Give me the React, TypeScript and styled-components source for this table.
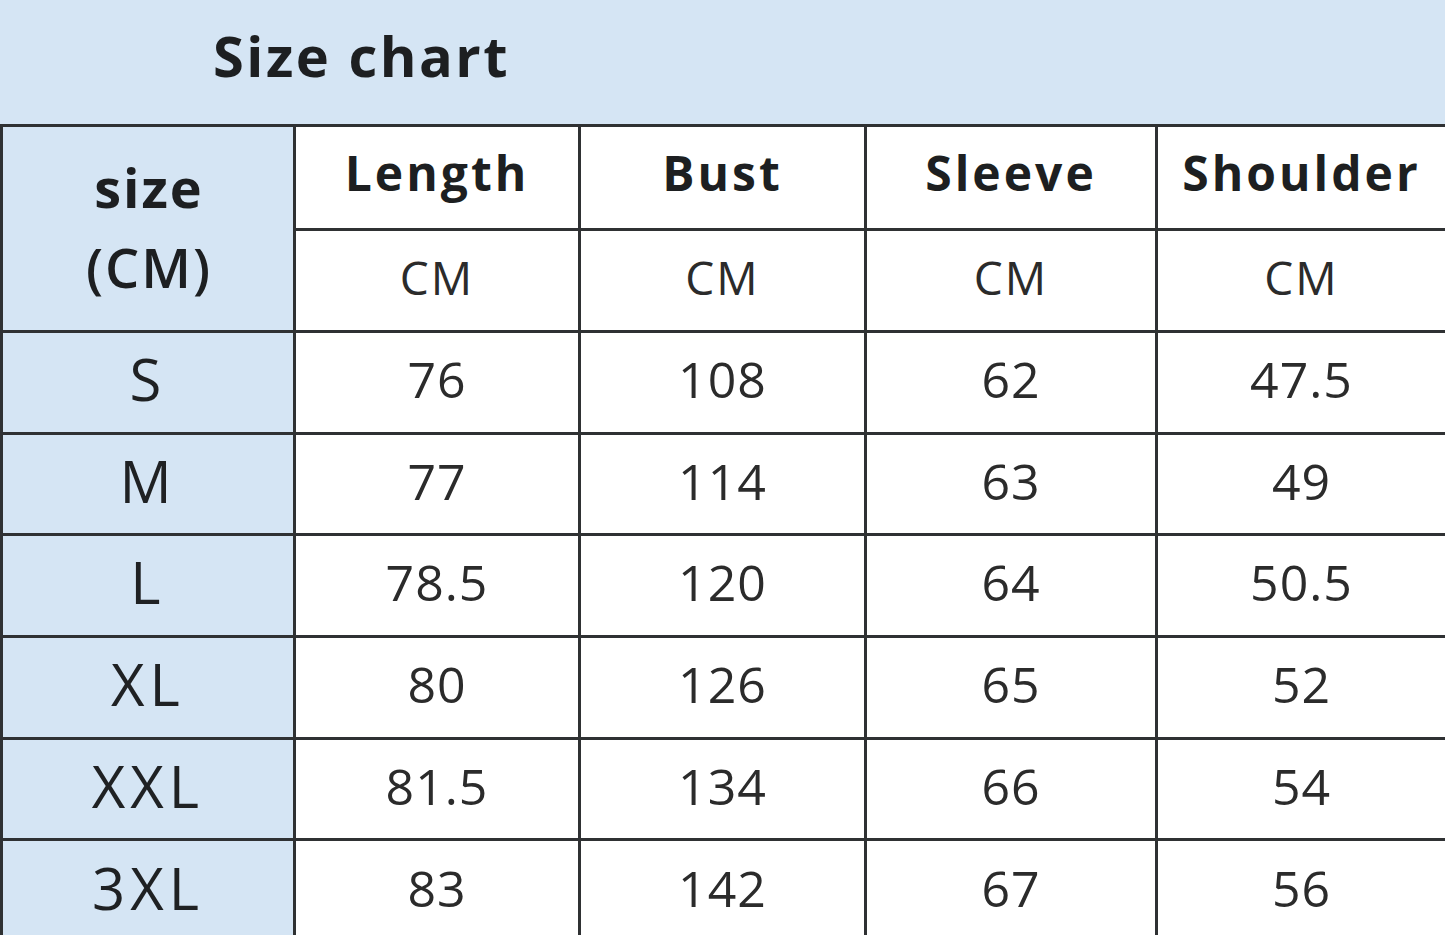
import styled, { createGlobalStyle } from "styled-components"

const columns = ["Length", "Bust", "Sleeve", "Shoulder"]

const rows = [
  { size: "S", values: ["76", "108", "62", "47.5"] },
  { size: "M", values: ["77", "114", "63", "49"] },
  { size: "L", values: ["78.5", "120", "64", "50.5"] },
  { size: "XL", values: ["80", "126", "65", "52"] },
  { size: "XXL", values: ["81.5", "134", "66", "54"] },
  { size: "3XL", values: ["83", "142", "67", "56"] },
]

export default function App() {
  return (
    <>
      <GlobalStyle />
      <Page>
        <Banner>
          <Title>Size chart</Title>
        </Banner>
        <Grid>
          <SizeHead>
            <span>size</span>
            <span>(CM)</span>
          </SizeHead>
          {columns.map((c) => (
            <HeadCell key={c}>{c}</HeadCell>
          ))}
          {columns.map((c) => (
            <UnitCell key={c + "-unit"}>CM</UnitCell>
          ))}
          {rows.flatMap((r) => [
            <SizeCell key={r.size}>{r.size}</SizeCell>,
            ...r.values.map((v, i) => <ValueCell key={r.size + i}>{v}</ValueCell>),
          ])}
        </Grid>
      </Page>
    </>
  )
}

const GlobalStyle = createGlobalStyle`
  html, body {
    margin: 0;
    padding: 0;
    background: #fff;
    overflow: hidden;
  }
  body {
    font-family: "Open Sans", "Liberation Sans", sans-serif;
  }
`

const blue = "#d5e5f4"
const line = "#2f3133"

const Page = styled.div`
  width: 1445px;
  height: 935px;
  overflow: hidden;
  display: flex;
  flex-direction: column;
`

const Banner = styled.div`
  height: 124px;
  flex: none;
  background: ${blue};
  display: flex;
  align-items: center;
  padding-left: 213px;
  padding-bottom: 14px;
  box-sizing: border-box;
`

const Title = styled.h1`
  margin: 0;
  font-size: 56px;
  font-weight: 700;
  letter-spacing: 2.5px;
  color: #1d1f21;
`

const Grid = styled.div`
  display: grid;
  grid-template-columns: 290px 282px 283px 288px 1fr;
  grid-template-rows: 101px 99px 99px 98px 99px 99px 98px 100px;
  gap: 3px;
  padding: 3px 0 0 3px;
  background: ${line};
`

const Cell = styled.div`
  display: flex;
  align-items: center;
  justify-content: center;
  background: #fff;
  color: #2b2b2b;
  font-size: 50px;
  letter-spacing: 1px;
  line-height: 1;
  padding-bottom: 7px;
`

const SizeHead = styled(Cell)`
  grid-row: span 2;
  flex-direction: column;
  gap: 26px;
  background: ${blue};
  color: #1d1f21;
  font-weight: 700;
  font-size: 54px;
  letter-spacing: 2px;
  padding-left: 2px;
  padding-bottom: 4px;

  span:last-child {
    font-weight: 600;
  }
`

const HeadCell = styled(Cell)`
  font-weight: 700;
  font-size: 48px;
  letter-spacing: 3px;
  color: #1d1f21;
  padding-bottom: 10px;
`

const UnitCell = styled(Cell)`
  font-size: 46px;
  letter-spacing: 2px;
`

const SizeCell = styled(Cell)`
  background: ${blue};
  color: #1f2123;
  font-size: 58px;
  letter-spacing: 5px;
`

const ValueCell = styled(Cell)``
